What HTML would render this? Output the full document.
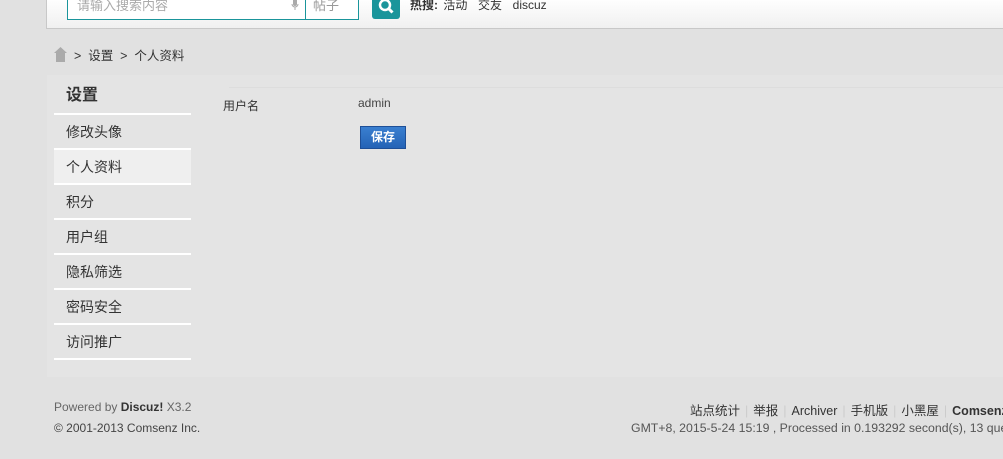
<!DOCTYPE html>
<html><head><meta charset="utf-8"><style>
*{margin:0;padding:0;box-sizing:border-box}
body{width:1003px;height:459px;overflow:hidden;background:#e1e1e1;font-family:"Liberation Sans","Noto Sans CJK SC",sans-serif;font-size:12px;color:#333;position:relative}
.hd{position:absolute;left:46px;top:-2px;width:960px;height:31px;background:linear-gradient(#fff,#f0f0f0);border:1px solid #c8c8c8;border-top:none}
.inp{position:absolute;left:67px;top:-2px;width:292px;height:22px;border:1px solid #1a959b;border-top:none;background:#fff}
.inp .t{position:absolute;left:9px;top:-3px;color:#aaa;font-size:13px}
.inp .sel{position:absolute;left:237px;top:0;width:1px;height:21px;background:#1a959b}
.inp .s2{position:absolute;left:245px;top:-3px;color:#999;font-size:13px}
.mic{position:absolute;left:223px;top:0;width:8px;height:13px}
.btn{position:absolute;left:372px;top:-2px;width:28px;height:21px;background:#1a959b;border-radius:0 0 3px 3px}
.hot{position:absolute;left:410px;top:-4px;font-size:12px;color:#333;word-spacing:2px}
.crumb{position:absolute;left:54px;top:45px;font-size:12.5px;color:#333}
.box{position:absolute;left:47px;top:75px;width:960px;height:302px;background:#e4e4e4}
.side{position:absolute;left:7px;top:2px;width:137px}
.side h2{font-size:16px;font-weight:bold;height:38px;line-height:38px;padding-left:12px;border-bottom:2px solid #fff;color:#333}
.side div{height:35px;line-height:34px;padding-left:12px;font-size:14px;border-bottom:2px solid #fff;color:#333}
.side div.on{background:#efefef}
.topline{position:absolute;left:182px;top:12px;width:778px;height:1px;background:#ddd}
.lbl{position:absolute;left:176px;top:22px;color:#333}
.val{position:absolute;left:311px;top:21px;color:#444}
.save{position:absolute;left:313px;top:51px;width:46px;height:23px;background:linear-gradient(#3a7fd0,#2563b6);border:1px solid #1e4f97;color:#fff;font-weight:bold;text-align:center;line-height:21px;font-size:12px}
.f1{position:absolute;left:54px;top:400px;color:#666}
.f2{position:absolute;left:54px;top:421px;color:#444}
.f3{position:absolute;left:690px;top:400px;color:#333;white-space:nowrap;font-size:12.5px}
.f3 i{color:#ccc;font-style:normal;margin:0 5px}
.f4{position:absolute;left:631px;top:421px;color:#555;white-space:nowrap;font-size:12.3px}
</style></head><body>
<div class="hd"></div>
<div class="inp"><span class="t">请输入搜索内容</span>
<svg class="mic" viewBox="0 0 8 13"><rect x="2" y="0" width="4" height="8" rx="2" fill="#aaa"/><path d="M1 6a3 3 0 0 0 6 0M4 9v3" stroke="#aaa" fill="none"/></svg>
<span class="sel"></span><span class="s2">帖子</span></div>
<div class="btn"><svg width="28" height="21" viewBox="0 0 28 21"><circle cx="13" cy="7" r="5" stroke="#fff" stroke-width="2.5" fill="none"/><path d="M16.5 10.5l4 4" stroke="#fff" stroke-width="3"/></svg></div>
<div class="hot"><b>热搜:</b> 活动 &nbsp;交友 &nbsp;discuz</div>
<div class="crumb"><svg width="13" height="15" viewBox="0 0 13 15" style="vertical-align:-2px"><path d="M6.5 0L0 6h2v9h9V6h2z" fill="#aaa"/></svg>&nbsp; &gt; &nbsp;设置 &nbsp;&gt; &nbsp;个人资料</div>
<div class="box">
<div class="side"><h2>设置</h2><div>修改头像</div><div class="on">个人资料</div><div>积分</div><div>用户组</div><div>隐私筛选</div><div>密码安全</div><div>访问推广</div></div>
<div class="topline"></div>
<div class="lbl">用户名</div><div class="val">admin</div>
<div class="save">保存</div>
</div>
<div class="f1">Powered by <b style="color:#333">Discuz!</b> X3.2</div>
<div class="f2">© 2001-2013 Comsenz Inc.</div>
<div class="f3">站点统计<i>|</i>举报<i>|</i>Archiver<i>|</i>手机版<i>|</i>小黑屋<i>|</i><b>Comsenz Inc.</b></div>
<div class="f4">GMT+8, 2015-5-24 15:19 , Processed in 0.193292 second(s), 13 queries .</div>
</body></html>
